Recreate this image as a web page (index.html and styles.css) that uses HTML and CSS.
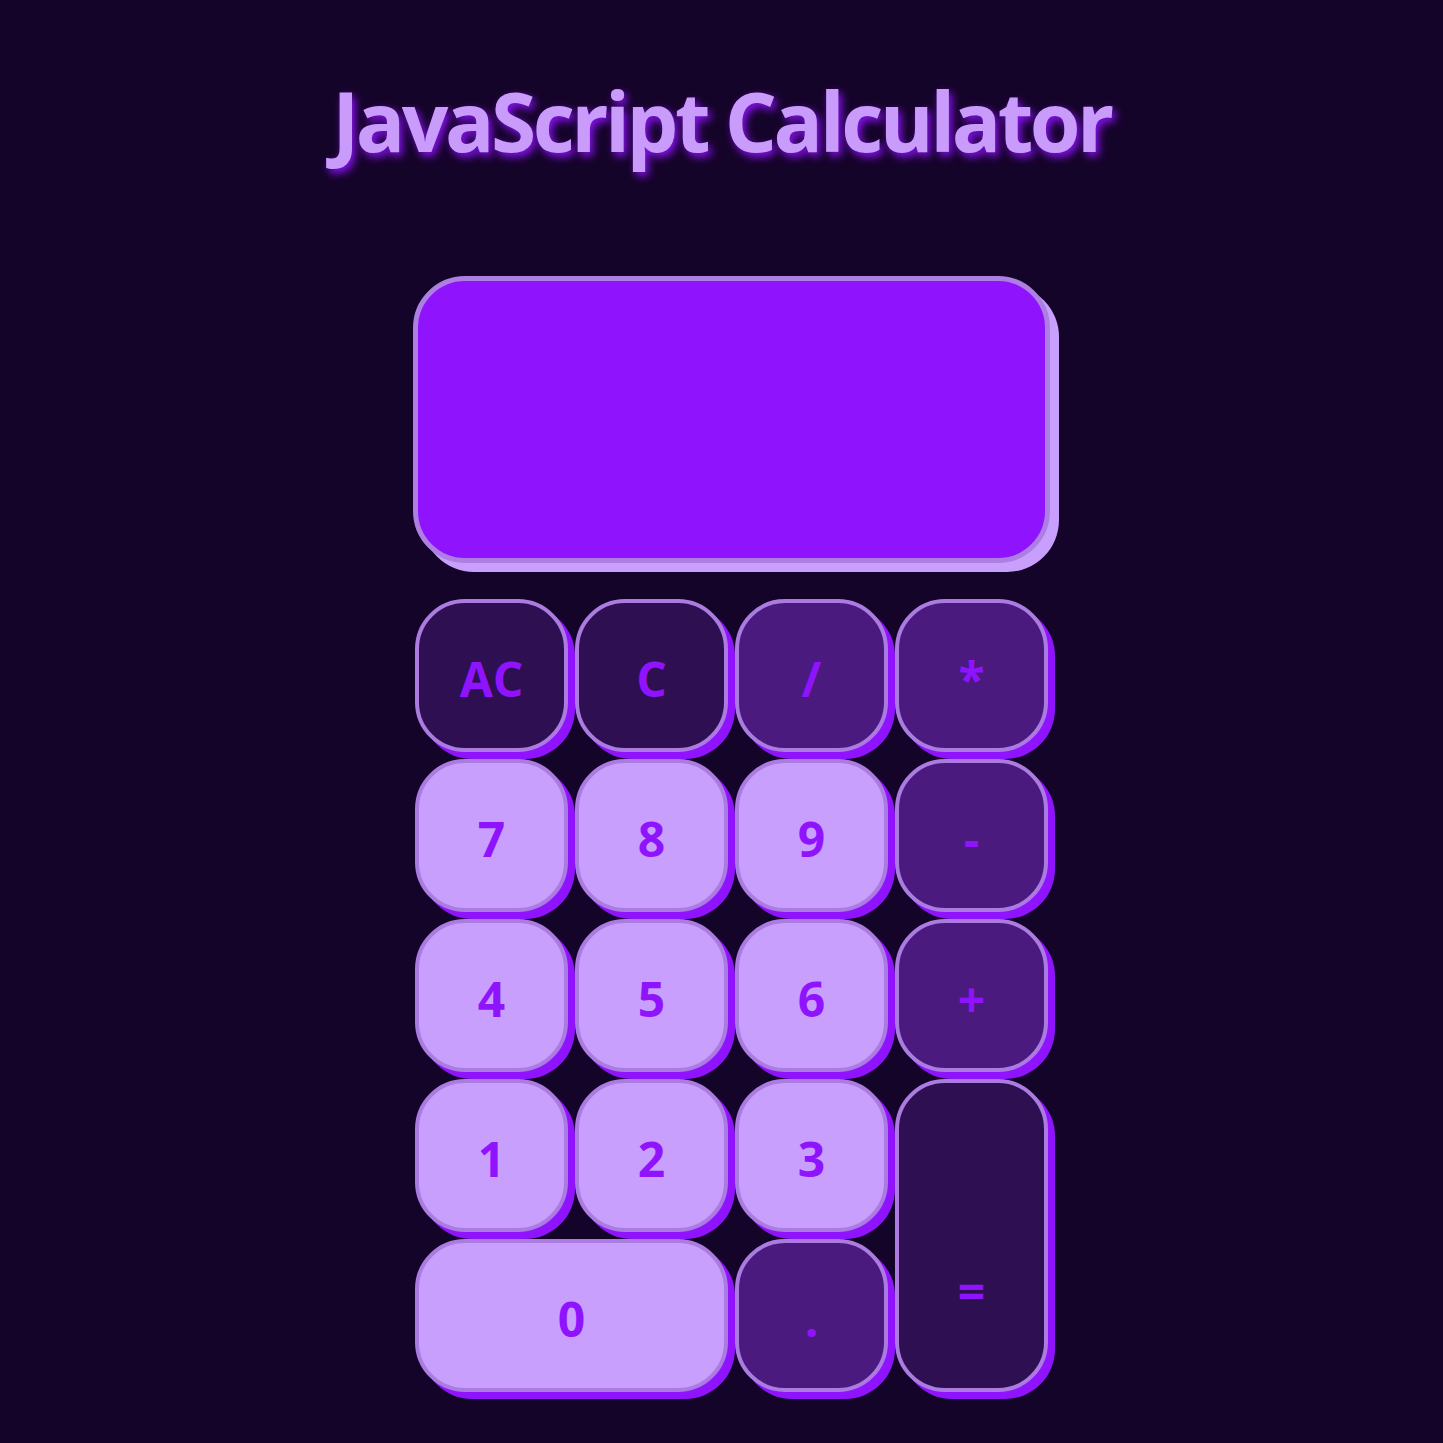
FILE: index.html
```html
<!DOCTYPE html>
<html lang="en">
<head>
<meta charset="utf-8">
<title>JavaScript Calculator</title>
<link rel="stylesheet" href="styles.css">
</head>
<body>
<main class="page">
  <h1 class="title">JavaScript Calculator</h1>
  <div class="calculator">
    <div class="display"></div>
    <div class="keys">
      <button class="key key-dark">AC</button>
      <button class="key key-dark">C</button>
      <button class="key key-op">/</button>
      <button class="key key-op">*</button>
      <button class="key key-num">7</button>
      <button class="key key-num">8</button>
      <button class="key key-num">9</button>
      <button class="key key-op">-</button>
      <button class="key key-num">4</button>
      <button class="key key-num">5</button>
      <button class="key key-num">6</button>
      <button class="key key-op">+</button>
      <button class="key key-num">1</button>
      <button class="key key-num">2</button>
      <button class="key key-num">3</button>
      <button class="key key-dark key-equals">=</button>
      <button class="key key-num key-zero">0</button>
      <button class="key key-op">.</button>
    </div>
  </div>
</main>
</body>
</html>
```
FILE: styles.css
```css
html, body {
  margin: 0;
  padding: 0;
  background: #150429;
}

body {
  font-family: "Open Sans", "Noto Sans", sans-serif;
  min-height: 1443px;
}

.page {
  display: flex;
  flex-direction: column;
  align-items: center;
  padding-top: 71px;
}

.title {
  margin: 0;
  font-size: 82px;
  line-height: 1.2;
  font-weight: 700;
  color: #c99cfc;
  letter-spacing: -3.5px;
  text-shadow: 3px 4px 8px #8a12f5;
}

.calculator {
  margin-top: 107px;
  margin-left: 20px;
  width: 637px;
  display: flex;
  flex-direction: column;
}

.display {
  box-sizing: border-box;
  width: 637px;
  height: 287px;
  border: 5px solid #ad7fe2;
  border-radius: 52px;
  background: #9013fe;
  box-shadow: 9px 9px 0 #c99ffd;
}

.keys {
  margin-top: 36px;
  margin-left: 2px;
  display: grid;
  grid-template-columns: repeat(4, 153px);
  grid-auto-rows: 153px;
  gap: 7px;
}

.key {
  box-sizing: border-box;
  border: 4px solid #ab7be2;
  border-radius: 50px;
  box-shadow: 7px 7px 0 #9013fe;
  font-family: "Open Sans", "Noto Sans", sans-serif;
  font-size: 48px;
  font-weight: 700;
  color: #9013fe;
  display: flex;
  align-items: center;
  justify-content: center;
  padding: 5px 0 0 0;
  cursor: pointer;
}

.key-dark {
  background: #2d0f52;
}

.key-op {
  background: #4a1a7e;
}

.key-num {
  background: #c99ffd;
}

.key-equals {
  grid-column: 4;
  grid-row: 4 / span 2;
  padding-top: 110px;
}

.key-zero {
  grid-column: 1 / span 2;
}
```
